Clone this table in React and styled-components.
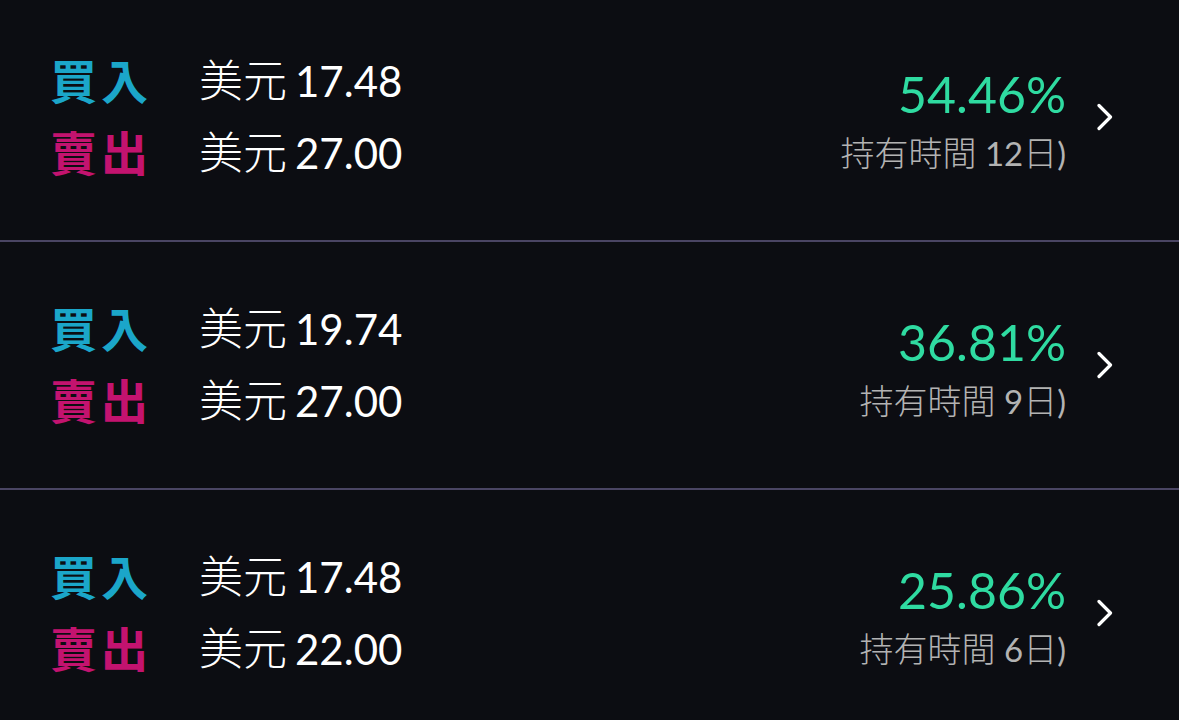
import React from 'react';
import styled, { createGlobalStyle } from 'styled-components';

const GlobalStyle = createGlobalStyle`
	html, body {
		margin: 0;
		padding: 0;
		background: #0c0d12;
	}
	body {
		font-family: 'Lato', 'Noto Sans CJK TC', sans-serif;
		color: #ffffff;
	}
`;

const List = styled.div`
	width: 1179px;
	height: 720px;
	overflow: hidden;
	background: #0c0d12;
`;

const Rows = styled.div`
	margin-top: -6px;
`;

const Row = styled.div`
	height: 246px;
	display: flex;
	align-items: center;
	padding: 0 66px 0 50px;
	border-bottom: 2px solid #4a4563;
`;

const Trades = styled.div`
	display: grid;
	grid-template-columns: 149px auto;
	grid-auto-rows: 72px;
	align-items: center;
	flex: 1;
	margin-bottom: 6px;
`;

const Label = styled.span`
	font-family: 'Noto Sans CJK TC', sans-serif;
	font-weight: 700;
	font-size: 47px;
	letter-spacing: 4px;
	color: ${(props) => (props.$side === 'buy' ? '#1ba6c9' : '#c3136f')};
`;

const Price = styled.span`
	font-size: 42px;
	font-weight: 400;
	color: #ffffff;
	white-space: nowrap;
`;

const Currency = styled.span`
	font-family: 'Noto Sans CJK TC', sans-serif;
	font-weight: 300;
	font-size: 44px;
	margin-right: 8px;
`;

const Result = styled.div`
	display: flex;
	flex-direction: column;
	align-items: flex-end;
	margin-top: 12px;
`;

const Percent = styled.div`
	font-size: 50px;
	font-weight: 400;
	line-height: 58px;
	color: #2fdba1;
`;

const Held = styled.div`
	font-size: 33px;
	font-weight: 400;
	line-height: 58px;
	color: #b3b3b3;
	white-space: nowrap;
`;

const HeldCjk = styled.span`
	font-family: 'Noto Sans CJK TC', sans-serif;
	font-weight: 300;
	font-size: 34px;
`;

const Chevron = styled.svg`
	width: 16px;
	height: 28px;
	margin-left: 31px;
	flex-shrink: 0;
`;

const trades = [
	{ buy: '17.48', sell: '27.00', pct: '54.46%', days: '12' },
	{ buy: '19.74', sell: '27.00', pct: '36.81%', days: '9' },
	{ buy: '17.48', sell: '22.00', pct: '25.86%', days: '6' },
];

export default function App() {
	return (
		<>
			<GlobalStyle />
			<List>
				<Rows>
					{trades.map((t, i) => (
						<Row key={i}>
							<Trades>
								<Label $side="buy">買入</Label>
								<Price>
									<Currency>美元</Currency>
									{t.buy}
								</Price>
								<Label $side="sell">賣出</Label>
								<Price>
									<Currency>美元</Currency>
									{t.sell}
								</Price>
							</Trades>
							<Result>
								<Percent>{t.pct}</Percent>
								<Held>
									<HeldCjk>持有時間</HeldCjk> {t.days}
									<HeldCjk>日</HeldCjk>)
								</Held>
							</Result>
							<Chevron viewBox="0 0 16 28">
								<path d="M2 2.5 L13.5 14 L2 25.5" fill="none" stroke="#ffffff" strokeWidth="3.2" strokeLinecap="round" strokeLinejoin="round" />
							</Chevron>
						</Row>
					))}
				</Rows>
			</List>
		</>
	);
}
